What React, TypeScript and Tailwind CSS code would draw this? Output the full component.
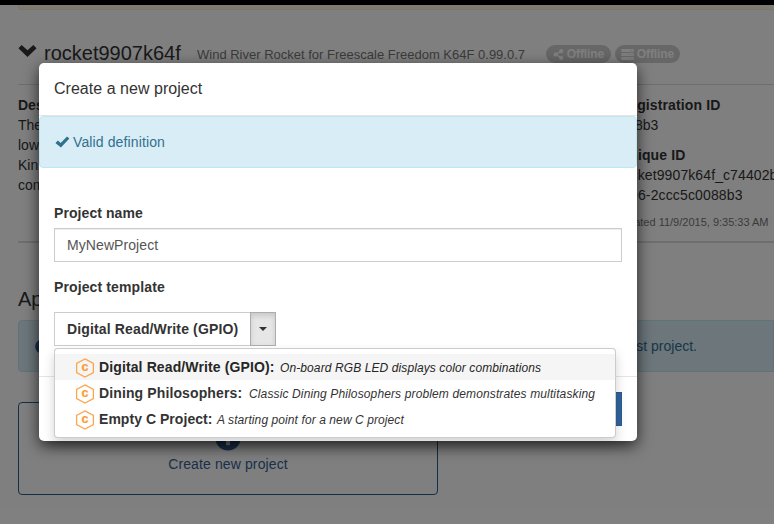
import React from "react";
import { FaShareAlt, FaInfoCircle, FaPlusCircle } from "react-icons/fa";

const templates = [
  { name: "Digital Read/Write (GPIO):", text: "On-board RGB LED displays color combinations", nameClass: "w-[181px] tracking-[0.12px]", textClass: "tracking-[0.1px]" },
  { name: "Dining Philosophers:", text: "Classic Dining Philosophers problem demonstrates multitasking", nameClass: "w-[150px] tracking-[0.12px]", textClass: "tracking-[0.13px]" },
  { name: "Empty C Project:", text: "A starting point for a new C project", nameClass: "w-[118px] tracking-[0.04px]", textClass: "tracking-[0.09px]" },
];

function HexIcon() {
  return (
    <svg width="20" height="20" viewBox="0 0 20 20" className="shrink-0">
      <path d="M10 0.9 L18.4 5.4 V14.6 L10 19.1 L1.6 14.6 V5.4 Z" fill="none" stroke="#fca650" strokeWidth="1.3" />
      <text x="10" y="13.3" textAnchor="middle" fontSize="12.5" fontWeight="bold" fill="#fc9a35" stroke="#fc9a35" strokeWidth="0.2" fontFamily="Liberation Sans, sans-serif">c</text>
    </svg>
  );
}

function ChevronIcon() {
  return (
    <svg width="19" height="12" viewBox="0 0 19 12" className="mt-[5px] shrink-0" fill="#333">
      <path d="M3.7 0 L9.5 5.2 L15.3 0 L18.6 3.3 L9.5 12 L0.4 3.3 Z" />
    </svg>
  );
}

function CheckIcon() {
  return (
    <svg width="15" height="12" viewBox="0 0 15 12" className="-mt-px" fill="currentColor">
      <path d="M0.4 6.9 L2.9 4.5 L5.7 6.9 L12 0.5 L14.4 2.6 L5.9 11.6 Z" />
    </svg>
  );
}

function ServerIcon() {
  return (
    <svg width="13" height="11" viewBox="0 0 13 11">
      <path d="M0.3 0H12.7V3H0.3Z M0.3 4H12.7V7H0.3Z M0.3 8H12.7V11H0.3Z" fill="white" />
      <path d="M9 1.5H11.5 M6.5 5.5H11.5 M8 9.5H11.5" stroke="#e6e6e6" strokeWidth="0.8" />
    </svg>
  );
}

function Badge({ children }: { children: React.ReactNode }) {
  return (
    <span className="flex h-[18px] w-[65px] items-center justify-center gap-[3px] whitespace-nowrap rounded-full bg-[#cfcfcf] text-[12px] font-bold leading-none tracking-[-0.1px] text-white">
      {children}
    </span>
  );
}

function Page() {
  return (
    <main className="flex h-full w-full flex-col pl-[18px]">
      <div className="h-[10px] shrink-0 rounded-bl border-b border-l border-[#faebcc] bg-[#fcf8e3]" />
      <header className="mt-[30px] flex h-[28px] shrink-0 items-start whitespace-nowrap">
        <ChevronIcon />
        <h1 className="ml-[7px] w-[153px] text-[20px] leading-[26px]">rocket9907k64f</h1>
        <span className="w-[349px] pt-[5px] text-[13px] leading-[20px] text-[#777]">Wind River Rocket for Freescale Freedom K64F 0.99.0.7</span>
        <div className="flex gap-1 pt-[5px]">
          <Badge><FaShareAlt size={11} />Offline</Badge>
          <Badge><ServerIcon />Offline</Badge>
        </div>
      </header>
      <hr className="mt-4 shrink-0 border-[#ddd]" />
      <section className="mt-[10px] flex h-[146px] shrink-0 leading-[20px]">
        <dl className="w-[600px] shrink-0">
          <dt className="font-bold">Description</dt>
          <dd>The<br />low<br />Kin<br />com</dd>
        </dl>
        <dl className="shrink-0 whitespace-nowrap">
          <dt className="pl-px font-bold tracking-[0.12px]">Registration ID</dt>
          <dd className="pl-[17px]">8b3</dd>
          <dt className="mt-[10px] pl-px font-bold tracking-[0.12px]">Unique ID</dt>
          <dd className="tracking-[0.1px]">rocket9907k64f_c74402b</dd>
          <dd className="pl-[12px] tracking-[0.14px]">96-2ccc5c0088b3</dd>
          <dd className="-ml-[4px] mt-[7px] text-[11px] text-[#777]">Updated 11/9/2015, 9:35:33 AM</dd>
        </dl>
      </section>
      <hr className="shrink-0 border-t-2 border-[#ddd]" />
      <h2 className="mt-[43px] shrink-0 text-[20px] leading-[26px]">Applications</h2>
      <div className="mt-[8px] flex h-[52px] shrink-0 items-center rounded-l border border-[#bce8f1] bg-[#d9edf7] pl-[16px] text-[#31708f]">
        <FaInfoCircle size={15} className="text-[#286090]" />
        <span className="ml-[450px] w-[197px] text-right">your first project.</span>
      </div>
      <button className="mt-[30px] flex h-[93px] w-[420px] shrink-0 flex-col items-center rounded border border-[#286090] pt-[22px] text-[#335f95]">
        <FaPlusCircle size={26} />
        <span className="mt-[3px] leading-[20px] tracking-[0.12px]">Create new project</span>
      </button>
    </main>
  );
}

function Modal() {
  return (
    <div role="dialog" className="absolute left-[39px] top-[63px] flex h-[378px] w-[598px] flex-col rounded-[5px] bg-white shadow-[0_5px_15px_rgba(0,0,0,0.7)]">
      <h3 className="h-[53px] border-b border-[#e5e5e5] px-[15px] text-[16px] leading-[51px] tracking-[0.03px]">Create a new project</h3>
      <div className="flex h-[52px] items-center gap-[3px] rounded border border-[#bce8f1] bg-[#d9edf7] px-[15px] tracking-[0.12px] text-[#31708f]">
        <CheckIcon />
        Valid definition
      </div>
      <div className="flex h-[208px] flex-col px-[15px] pt-[35px]">
        <label className="font-bold leading-[20px] tracking-[0.08px]">Project name</label>
        <div className="mt-[5px] h-[34px] border border-[#ccc] px-3 leading-[32px] tracking-[0.08px] text-[#555] shadow-[inset_0_1px_1px_rgba(0,0,0,0.075)]">MyNewProject</div>
        <label className="mt-[15px] font-bold leading-[20px] tracking-[0.12px]">Project template</label>
        <div className="relative mt-[15px] flex h-[34px] font-bold">
          <button className="w-[197px] whitespace-nowrap border border-[#ccc] pl-3 text-left tracking-[0.14px]">Digital Read/Write (GPIO)</button>
          <button className="-ml-px flex w-[26px] items-center justify-center border border-[#adadad] bg-[#e6e6e6] shadow-[inset_0_3px_5px_rgba(0,0,0,0.125)]">
            <span className="h-0 w-0 border-x-4 border-t-4 border-x-transparent border-t-[#333]" />
          </button>
          <ul className="absolute left-0 top-[36px] h-[90px] w-[562px] rounded border border-black/20 bg-white py-[5px] shadow-[0_6px_12px_rgba(0,0,0,0.175)]">
            {templates.map((t, i) => (
              <li key={t.name} className={`flex h-[26px] items-center whitespace-nowrap pl-[20px] ${i === 0 ? "bg-[#f5f5f5] text-[#262626]" : ""}`}>
                <span className="mt-px shrink-0"><HexIcon /></span>
                <span className={`ml-1 shrink-0 ${t.nameClass}`}>{t.name}</span>
                <i className={`pt-px text-[12px] font-normal ${t.textClass}`}>{t.text}</i>
              </li>
            ))}
          </ul>
        </div>
      </div>
      <footer className="flex h-[65px] justify-end border-t border-[#e5e5e5] p-[15px]">
        <button className="h-[34px] w-[70px] border border-[#2b5a8c] bg-[#31639c] text-white" />
      </footer>
    </div>
  );
}

export default function App() {
  return (
    <div className="relative h-[524px] w-[774px] overflow-hidden bg-white font-['Liberation_Sans',Arial,sans-serif] text-[14px] text-[#333]">
      <Page />
      <div className="absolute inset-0 bg-black/50" />
      <div className="absolute inset-x-0 top-0 h-[5px] bg-black" />
      <Modal />
    </div>
  );
}
